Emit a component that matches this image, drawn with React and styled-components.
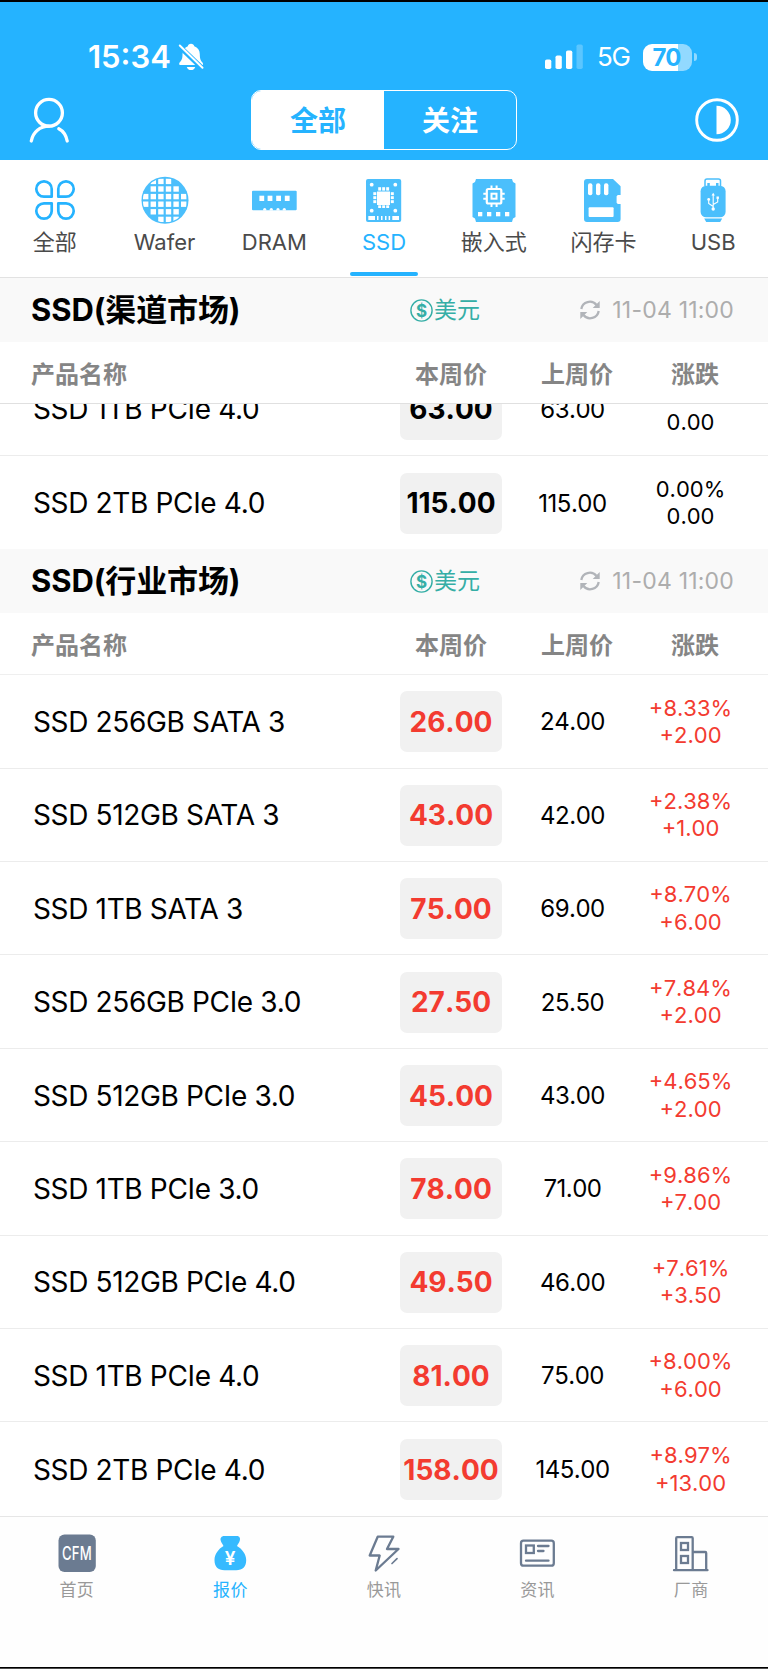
import React from "react";
import styled, { createGlobalStyle } from "styled-components";

const BLUE = "#25b3ff";
const ICON_BLUE = "#4bbffc";
const SLATE = "#6b7b91";

const GlobalStyle = createGlobalStyle`
* {
    box-sizing: border-box;
}
body {
    margin: 0;
    background: #fff;
    font-family: Inter, "Noto Sans CJK SC", sans-serif;
    -webkit-font-smoothing: antialiased;
}
`;

const Page = styled.div`
display: flex;
flex-direction: column;
width: 768px;
height: 1669px;
overflow: hidden;
background: #fff;
border-top: 2px solid #000;
`;

const Icon = styled.svg`
display: block;
flex: none;
`;

const Header = styled.header`
flex: none;
height: 158px;
background: ${BLUE};
color: #fff;
`;

const StatusBar = styled.div`
display: flex;
align-items: center;
height: 88px;
padding: 22px 71px 0 88px;
`;

const Clock = styled.span`
width: 90px;
font-size: 31px;
font-weight: 600;
line-height: 36px;
letter-spacing: 0;
white-space: nowrap;
`;

const StatusRight = styled.div`
display: flex;
align-items: center;
margin-left: auto;
`;

const Network = styled.span`
width: 34px;
margin: 0 12px 0 14px;
font-size: 26px;
line-height: 30px;
letter-spacing: -1.2px;
white-space: nowrap;
`;

const Battery = styled.div`
display: flex;
align-items: center;
justify-content: center;
width: 49px;
height: 27px;
padding-right: 2px;
border-radius: 9px;
background: linear-gradient(90deg, #fff 71%, #92d9ff 71%);
color: ${BLUE};
font-size: 24px;
font-weight: 700;
letter-spacing: -0.8px;
`;

const BatteryTip = styled.div`
width: 3px;
height: 8px;
margin-left: 2px;
border-radius: 0 3px 3px 0;
background: #92d9ff;
`;

const TitleBar = styled.div`
display: flex;
align-items: center;
justify-content: space-between;
height: 60px;
padding: 0 28px;
`;

const Segmented = styled.div`
display: flex;
width: 266px;
height: 60px;
margin-left: 4px;
overflow: hidden;
border: 1.5px solid #fff;
border-radius: 10px;
`;

const Segment = styled.button`
flex: 1;
padding: 0 0 2px;
border: 0;
background: ${({ $active }) => ($active ? "#fff" : "transparent")};
color: ${({ $active }) => ($active ? BLUE : "#fff")};
font-family: inherit;
font-size: 28px;
font-weight: 700;
`;

const Categories = styled.nav`
display: flex;
flex: none;
height: 118px;
border-bottom: 1px solid #e2e2e2;
`;

const Category = styled.div`
display: flex;
flex: 1;
flex-direction: column;
align-items: center;
padding-top: 16px;
color: ${({ $active }) => ($active ? BLUE : "#4a4a4a")};
font-size: 22px;
line-height: 32px;
white-space: nowrap;
`;

const CategoryName = styled.span`
height: 32px;
margin-top: 2px;
`;

const Underline = styled.div`
width: 68px;
height: 4px;
margin-top: 14px;
border-radius: 2px;
background: ${BLUE};
`;

const SectionBar = styled.div`
display: grid;
grid-template-columns: 379px 1fr auto;
align-items: center;
flex: none;
height: 64px;
padding: 0 34px 0 31px;
background: #f9f9f9;
`;

const SectionTitle = styled.h2`
margin: 0;
font-size: 31px;
font-weight: 700;
line-height: 40px;
letter-spacing: -0.1px;
white-space: nowrap;
`;

const Currency = styled.div`
display: flex;
align-items: center;
gap: 1px;
color: #35aea6;
font-size: 23px;
line-height: 32px;
`;

const Updated = styled.div`
display: flex;
align-items: center;
gap: 12px;
color: #adadad;
font-size: 23px;
line-height: 32px;
letter-spacing: 0.2px;
font-kerning: none;
`;

const ColumnHeads = styled.div`
display: grid;
grid-template-columns: 369px 102px 150px 86px;
align-items: center;
flex: none;
height: 62px;
padding: 0 0 1px 31px;
border-bottom: 1px solid ${({ $strong }) => ($strong ? "#e0e0e0" : "#efefef")};
color: #858585;
font-size: 24px;
font-weight: 700;
text-align: center;
`;

const ColumnHead = styled.span`
text-align: ${({ $left }) => ($left ? "left" : "center")};
white-space: nowrap;
`;

const Rows = styled.div`
display: flex;
flex: none;
flex-direction: column;
justify-content: flex-end;
height: ${({ $height }) => $height};
overflow: hidden;
`;

const Row = styled.div`
display: grid;
grid-template-columns: 367px 102px 141px 95px;
align-items: center;
flex: none;
height: 93.4px;
padding: 1px 0 0 33px;
border-bottom: ${({ $last }) => ($last ? "0" : "1px solid #ececec")};
`;

const Product = styled.span`
font-size: 28px;
letter-spacing: -0.35px;
white-space: nowrap;
`;

const Price = styled.span`
display: flex;
align-items: center;
justify-content: center;
height: 61px;
border-radius: 7px;
background: #f1f1f1;
color: ${({ $up }) => ($up ? "#f33b30" : "#000")};
font-size: 28px;
font-weight: 700;
font-kerning: none;
`;

const LastPrice = styled.span`
font-size: 24px;
letter-spacing: -0.5px;
text-align: center;
font-kerning: none;
`;

const Change = styled.span`
display: flex;
flex-direction: column;
align-items: center;
color: ${({ $up }) => ($up ? "#f33b30" : "#000")};
font-size: 22px;
line-height: 27.4px;
font-kerning: none;
`;

const BottomNav = styled.nav`
display: flex;
flex: none;
height: 151px;
border-top: 1px solid #e6e6e6;
background: #fefefe;
`;

const NavItem = styled.div`
display: flex;
flex: 1;
flex-direction: column;
align-items: center;
padding-top: 12px;
color: ${({ $active }) => ($active ? BLUE : "#999")};
font-size: 17px;
line-height: 26px;
letter-spacing: 0.3px;
`;

const BottomEdge = styled.div`
flex: none;
height: 3px;
border-top: 1px solid #000;
background: #4c4c4c;
`;

const BellOff = () => (
    <Icon width="26" height="28" viewBox="0 0 26 28" fill="#fff">
        <path d="M13 .8c1.8 0 3 1 3.3 2.4 3.5 1.300 5.500 4.200 5.500 8 0 5.300 1.200 6.500 3.100 8.900v1.900H1.800c-.8-.5-.8-1.700-.2-2.500C3.500 17.200 4.500 16 4.500 11.200c0-4 2-6.700 5.300-8C10 1.800 11.200.8 13 .8z" />
        <path d="M8.800 24h8.400c-.5 1.900-2 3.100-4.200 3.100S9.300 25.900 8.800 24z" />
        <path d="M-.5 1.500l26 25" stroke={BLUE} strokeWidth="5" />
        <path d="M1.800 2.500l22.700 22.300" stroke="#fff" strokeWidth="2" strokeLinecap="round" />
    </Icon>
);

const Signal = () => (
    <Icon width="38" height="26" viewBox="0 0 38 26" fill="#fff">
        <rect x="0" y="15.500" width="6.300" height="9.500" rx="1.800" />
        <rect x="10.500" y="11.500" width="6.300" height="13.500" rx="1.800" />
        <rect x="21" y="6.500" width="6.300" height="18.500" rx="1.800" />
        <rect x="31.500" y=".5" width="6.300" height="24.500" rx="1.800" opacity=".25" />
    </Icon>
);

const UserIcon = () => (
    <Icon width="42" height="46" viewBox="0 0 42 46" fill="none" stroke="#fff" strokeWidth="3.300" strokeLinecap="round">
        <circle cx="21" cy="15.800" r="13.400" />
        <path d="M3.300 44C5 35 12 29.300 21 29.200M30.800 31.800C35 34 38 38 39.200 44" />
    </Icon>
);

const ContrastIcon = () => (
    <Icon width="46" height="46" viewBox="0 0 46 46">
        <circle cx="23" cy="23" r="20.300" fill="none" stroke="#fff" strokeWidth="2.900" />
        <path d="M22.500 8.700a14.300 14.300 0 0 1 0 28.600z" fill="#fff" />
    </Icon>
);

const AllIcon = () => (
    <Icon width="48" height="48" fill="none" stroke={BLUE} strokeWidth="2.700" strokeLinejoin="round">
        <path d="M20.700 20.700h-7.700a7.700 7.700 0 1 1 7.700-7.700zM27.300 20.700v-7.700a7.700 7.700 0 1 1 7.700 7.700zM20.700 27.300v7.700a7.700 7.700 0 1 1-7.700-7.700zM27.300 27.300h7.700a7.700 7.700 0 1 1-7.700 7.700z" />
    </Icon>
);

// first and last white cell of every line of the wafer
const waferLines = [[1, 3], [1, 4], [0, 5], [0, 5], [1, 4], [2, 4]];

const WaferIcon = () => (
    <Icon width="48" height="48">
        <clipPath id="wafer">
            <circle cx="24" cy="24.300" r="22.200" />
        </clipPath>
        <circle cx="24" cy="24.300" r="23.500" fill={ICON_BLUE} />
        <g clipPath="url(#wafer)" fill="#fff">
            {waferLines.map(([from, to], line) =>
                Array.from({ length: to - from + 1 }, (_, i) => (
                    <rect key={`${line}-${i}`} x={2 + (from + i) * 7.600} y={2.700 + line * 7.600} width="5.400" height="5.400" />
                ))
            )}
        </g>
    </Icon>
);

const DramIcon = () => (
    <Icon width="48" height="48">
        <rect x="2" y="14.700" width="44.700" height="19.500" rx="1" fill={ICON_BLUE} />
        <g fill="#fff">
            {[9.400, 17.600, 26.200, 34.800].map((x) => (
                <rect key={x} x={x} y="19.700" width="4.800" height="5.300" />
            ))}
            {[14.700, 21.300, 28, 34.300].map((x) => (
                <path key={x} d={`M${x - 1.600} 34.500v-1a1.600 1.600 0 0 1 3.200 0v1z`} />
            ))}
        </g>
    </Icon>
);

const SsdIcon = () => (
    <Icon width="48" height="48">
        <rect x="6" y="3" width="35.200" height="43" rx="2" fill={ICON_BLUE} />
        <g fill="#fff">
            <circle cx="11.700" cy="8.700" r="1.900" />
            <circle cx="35.300" cy="8.700" r="1.900" />
            <circle cx="11.700" cy="34.700" r="1.900" />
            <circle cx="35.300" cy="34.700" r="1.900" />
            <rect x="17" y="15.500" width="13" height="13.500" />
            {[0, 4, 8].map((d) => (
                <React.Fragment key={d}>
                    <rect x={18.200 + d} y="11.200" width="2.900" height="3.400" />
                    <rect x={18.200 + d} y="29.300" width="2.900" height="2.700" />
                    <rect x="13.300" y={16.200 + d} width="3" height="2.900" />
                    <rect x="30.800" y={16.200 + d} width="3" height="2.900" />
                </React.Fragment>
            ))}
            <rect x="8.300" y="40" width="6.700" height="4" />
            {[17, 21, 25, 28.600].map((x) => (
                <rect key={x} x={x} y="40" width="1.500" height="4" />
            ))}
            <rect x="32.300" y="40" width="6.700" height="4" />
        </g>
    </Icon>
);

const EmbeddedIcon = () => (
    <Icon width="48" height="48">
        <path d="M6 3h36l1 3 2.500 1.500v33.500L43 42.500 42 46H6l-1-3.500L2.500 41V7.500L5 6z" fill={ICON_BLUE} />
        <rect x="16.800" y="13" width="14.500" height="14.500" rx="1.500" fill="none" stroke="#fff" strokeWidth="2.200" />
        <rect x="21.500" y="17.700" width="5" height="5" fill="none" stroke="#fff" strokeWidth="2" />
        <path d="M21.500 12.500V9.500M26.600 12.500V9.500M21.500 31v-3M26.600 31v-3M16.300 17.700h-3M16.300 22.800h-3M34.700 17.700h-3M34.700 22.800h-3" stroke="#fff" strokeWidth="2" />
        {[8, 17, 26, 35].map((x) => (
            <rect key={x} x={x} y="36" width="4.300" height="4.300" fill="#fff" />
        ))}
    </Icon>
);

const CardIcon = () => (
    <Icon width="48" height="48">
        <path d="M8 3h26l7.600 7.300V19h-2.800l-1.200 1.200v6.600l1.200 1.200h2.800v15a3 3 0 0 1-3 3H8a3 3 0 0 1-3-3V6a3 3 0 0 1 3-3z" fill={ICON_BLUE} />
        {[9, 17, 25].map((x) => (
            <rect key={x} x={x} y="7.300" width="4.400" height="12" rx="2" fill="#fff" />
        ))}
        <rect x="9.600" y="31.300" width="25" height="9.700" rx="1" fill="#fff" />
    </Icon>
);

const UsbIcon = () => (
    <Icon width="48" height="48">
        <path d="M16 10V5a2 2 0 0 1 2-2h11.500a2 2 0 0 1 2 2v5" fill="none" stroke={ICON_BLUE} strokeWidth="1.500" />
        <rect x="18.300" y="7" width="2.500" height="3" fill={ICON_BLUE} />
        <rect x="27" y="7" width="2.500" height="3" fill={ICON_BLUE} />
        <rect x="11.600" y="9.700" width="25" height="31.600" rx="5.500" fill={ICON_BLUE} />
        <path d="M15.200 42.400h18l-2 3.600h-14z" fill={ICON_BLUE} />
        <path d="M24.200 32V19M24.200 30.500l-4.500-3v-3M24.200 28.500l4.500-2.500v-3.500" fill="none" stroke="#fff" strokeWidth="1.100" />
        <circle cx="24.200" cy="33" r="1.700" fill="#fff" />
        <circle cx="19.700" cy="23.500" r="1.400" fill="#fff" />
        <rect x="27.500" y="20.500" width="2.400" height="2.400" fill="#fff" />
        <path d="M24.200 16.700l1.700 2.800h-3.400z" fill="#fff" />
    </Icon>
);

const DollarIcon = () => (
    <Icon width="23" height="23">
        <circle cx="11.500" cy="11.500" r="10.600" fill="none" stroke="#35aea6" strokeWidth="1.400" />
        <text x="11.500" y="17.500" textAnchor="middle" fontSize="17" fontWeight="700" fill="#35aea6">$</text>
    </Icon>
);

const RefreshIcon = () => (
    <Icon width="20" height="20" fill="none" stroke="#b1b4b9" strokeWidth="2.300">
        <path d="M1.300 9A8.600 8.600 0 0 1 16.500 5M18.700 11A8.600 8.600 0 0 1 3.500 15" />
        <path d="M19.700 1v7h-7zM.3 19v-7h7z" fill="#b1b4b9" stroke="none" />
    </Icon>
);

const HomeIcon = () => (
    <Icon width="48" height="48">
        <rect x="5.500" y="5.500" width="37.300" height="37.500" rx="6" fill={SLATE} />
        <text x="24" y="30.800" textAnchor="middle" textLength="30" lengthAdjust="spacingAndGlyphs" fontSize="18" fontWeight="500" fill="#fff">CFM</text>
    </Icon>
);

const QuoteIcon = () => (
    <Icon width="48" height="48">
        <path d="M18 7h13c2.500 0 3.500 2.200 2.800 4.500-.5 2-1.800 3.500-2.800 5.500 5 3 9.200 8 9.200 14 0 7-3.500 10.200-10 10.200H18.500c-6.500 0-10-3.200-10-10.200 0-6 4-11 9-14-1-2-2.300-3.500-2.800-5.500C14 9.200 15.500 7 18 7z" fill="#36baff" />
        <text x="24.300" y="36" textAnchor="middle" fontSize="19" fontWeight="600" fill="#fff">¥</text>
    </Icon>
);

const FlashIcon = () => (
    <Icon width="48" height="48" fill="none" stroke={SLATE} strokeWidth="2.300" strokeLinejoin="round" strokeLinecap="round">
        <path d="M17.700 7.700h15.600L27 20h11.500L15.700 41.500l4-15h-10z" />
        <path d="M32 34.500l5-4.800" strokeWidth="1.700" />
    </Icon>
);

const NewsIcon = () => (
    <Icon width="48" height="48" fill="none" stroke={SLATE} strokeWidth="2.300" strokeLinecap="round">
        <rect x="7" y="11.700" width="32.800" height="25" rx="2.500" />
        <rect x="12" y="16.500" width="7.800" height="7.500" />
        <path d="M24 17h10.500M24 22h5.500M12 31.700h22.500" />
    </Icon>
);

const VendorIcon = () => (
    <Icon width="48" height="48" fill="none" stroke={SLATE} strokeWidth="2.300" strokeLinejoin="round" strokeLinecap="round">
        <path d="M7 41.200h33.500M9.200 41V9.200a1 1 0 0 1 1-1h14.500a1 1 0 0 1 1 1V41M25.700 23h12.500a1 1 0 0 1 1 1v17" />
        <rect x="14" y="14" width="7" height="7" strokeLinejoin="miter" />
        <rect x="14" y="27" width="7" height="7" strokeLinejoin="miter" />
    </Icon>
);

const categories = [
    { name: "全部", icon: AllIcon },
    { name: "Wafer", icon: WaferIcon },
    { name: "DRAM", icon: DramIcon },
    { name: "SSD", icon: SsdIcon },
    { name: "嵌入式", icon: EmbeddedIcon },
    { name: "闪存卡", icon: CardIcon },
    { name: "USB", icon: UsbIcon },
];

const channelRows = [
    ["SSD 1TB PCIe 4.0", "63.00", "63.00", "0.00%", "0.00"],
    ["SSD 2TB PCIe 4.0", "115.00", "115.00", "0.00%", "0.00"],
];

const industryRows = [
    ["SSD 256GB SATA 3", "26.00", "24.00", "+8.33%", "+2.00"],
    ["SSD 512GB SATA 3", "43.00", "42.00", "+2.38%", "+1.00"],
    ["SSD 1TB SATA 3", "75.00", "69.00", "+8.70%", "+6.00"],
    ["SSD 256GB PCIe 3.0", "27.50", "25.50", "+7.84%", "+2.00"],
    ["SSD 512GB PCIe 3.0", "45.00", "43.00", "+4.65%", "+2.00"],
    ["SSD 1TB PCIe 3.0", "78.00", "71.00", "+9.86%", "+7.00"],
    ["SSD 512GB PCIe 4.0", "49.50", "46.00", "+7.61%", "+3.50"],
    ["SSD 1TB PCIe 4.0", "81.00", "75.00", "+8.00%", "+6.00"],
    ["SSD 2TB PCIe 4.0", "158.00", "145.00", "+8.97%", "+13.00"],
];

const navItems = [
    { name: "首页", icon: HomeIcon },
    { name: "报价", icon: QuoteIcon },
    { name: "快讯", icon: FlashIcon },
    { name: "资讯", icon: NewsIcon },
    { name: "厂商", icon: VendorIcon },
];

const Section = ({ title, rows, height, strong }) => (
    <>
        <SectionBar>
            <SectionTitle>{title}</SectionTitle>
            <Currency><DollarIcon />美元</Currency>
            <Updated><RefreshIcon />11-04 11:00</Updated>
        </SectionBar>
        <ColumnHeads $strong={strong}>
            <ColumnHead $left>产品名称</ColumnHead>
            <ColumnHead>本周价</ColumnHead>
            <ColumnHead>上周价</ColumnHead>
            <ColumnHead>涨跌</ColumnHead>
        </ColumnHeads>
        <Rows $height={height}>
            {rows.map(([name, price, last, percent, diff], i) => {
                const up = diff.startsWith("+");
                return (
                    <Row key={name} $last={i === rows.length - 1}>
                        <Product>{name}</Product>
                        <Price $up={up}>{price}</Price>
                        <LastPrice>{last}</LastPrice>
                        <Change $up={up}>
                            <span>{percent}</span>
                            <span>{diff}</span>
                        </Change>
                    </Row>
                );
            })}
        </Rows>
    </>
);

const App = () => (
    <>
        <GlobalStyle />
        <Page>
            <Header>
                <StatusBar>
                    <Clock>15:34</Clock>
                    <BellOff />
                    <StatusRight>
                        <Signal />
                        <Network>5G</Network>
                        <Battery>70</Battery>
                        <BatteryTip />
                    </StatusRight>
                </StatusBar>
                <TitleBar>
                    <UserIcon />
                    <Segmented>
                        <Segment $active>全部</Segment>
                        <Segment>关注</Segment>
                    </Segmented>
                    <ContrastIcon />
                </TitleBar>
            </Header>
            <Categories>
                {categories.map(({ name, icon: CategoryIcon }) => (
                    <Category key={name} $active={name === "SSD"}>
                        <CategoryIcon />
                        <CategoryName>{name}</CategoryName>
                        {name === "SSD" && <Underline />}
                    </Category>
                ))}
            </Categories>
            <Section title="SSD(渠道市场)" rows={channelRows} height="145.4px" strong />
            <Section title="SSD(行业市场)" rows={industryRows} height="840.4px" />
            <BottomNav>
                {navItems.map(({ name, icon: NavIcon }) => (
                    <NavItem key={name} $active={name === "报价"}>
                        <NavIcon />
                        {name}
                    </NavItem>
                ))}
            </BottomNav>
            <BottomEdge />
        </Page>
    </>
);

export default App;
